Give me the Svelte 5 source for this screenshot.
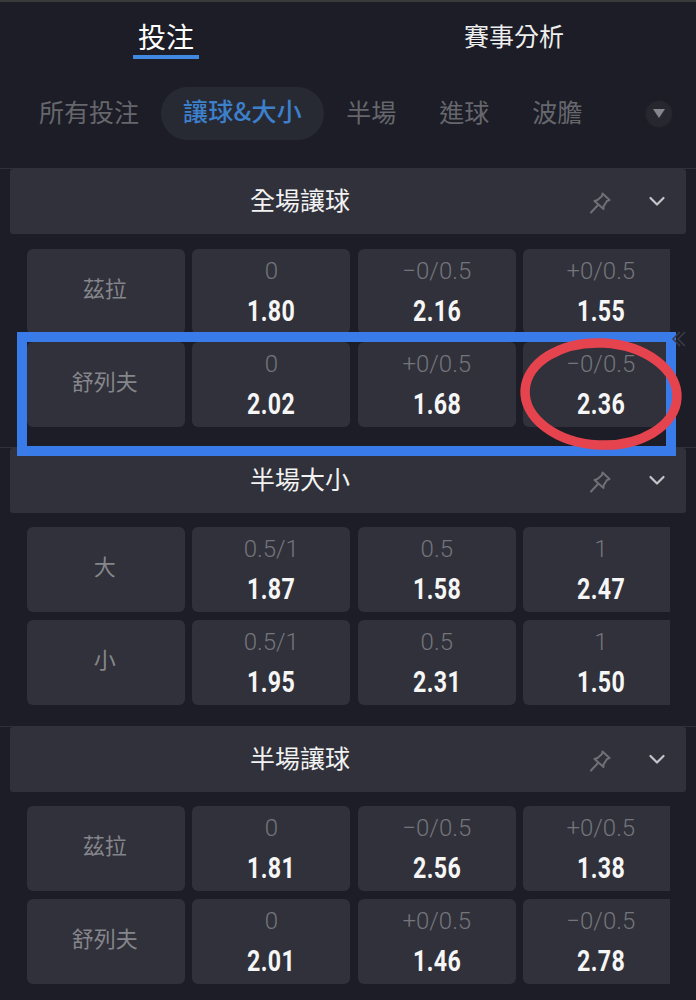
<script lang="ts">
  const filters = ["所有投注", "讓球&大小", "半場", "進球", "波膽"];
  const sections = [
    {
      title: "全場讓球",
      rows: [
        { name: "茲拉", cells: [["0", "1.80"], ["−0/0.5", "2.16"], ["+0/0.5", "1.55"]] },
        { name: "舒列夫", cells: [["0", "2.02"], ["+0/0.5", "1.68"], ["−0/0.5", "2.36"]] },
      ],
    },
    {
      title: "半場大小",
      rows: [
        { name: "大", cells: [["0.5/1", "1.87"], ["0.5", "1.58"], ["1", "2.47"]] },
        { name: "小", cells: [["0.5/1", "1.95"], ["0.5", "2.31"], ["1", "1.50"]] },
      ],
    },
    {
      title: "半場讓球",
      rows: [
        { name: "茲拉", cells: [["0", "1.81"], ["−0/0.5", "2.56"], ["+0/0.5", "1.38"]] },
        { name: "舒列夫", cells: [["0", "2.01"], ["+0/0.5", "1.46"], ["−0/0.5", "2.78"]] },
      ],
    },
  ];
</script>

<div class="page">
  <div class="tabs">
    <div class="tab active">投注</div>
    <div class="tab">賽事分析</div>
  </div>

  <div class="filters">
    {#each filters as f, i}
      <div class="filter" class:on={i === 1}>{f}</div>
    {/each}
    <div class="more"><span class="tri"></span></div>
  </div>

  {#each sections as s}
    <section>
      <header>
        <h3>{s.title}</h3>
        <svg class="pin" width="24" height="24" viewBox="0 0 24 24" fill="none" stroke="#6f7076" stroke-width="2" stroke-linejoin="round" stroke-linecap="round">
          <path d="M14.5 2.5 L21.5 9 L19 10 L15.5 15.5 L15.5 18 L6.5 10 L9.5 9 L14 5 Z" />
          <path d="M10 14 L3 21.5" />
        </svg>
        <svg class="chev" width="18" height="12" viewBox="0 0 18 12" fill="none" stroke="#c4c5c9" stroke-width="2.2" stroke-linecap="round" stroke-linejoin="round">
          <path d="M2.5 3 L9 9.5 L15.5 3" />
        </svg>
      </header>
      <div class="grid">
        {#each s.rows as r}
          <div class="cell name">{r.name}</div>
          {#each r.cells as c}
            <div class="cell">
              <span class="line">{c[0]}</span>
              <span class="odd">{c[1]}</span>
            </div>
          {/each}
        {/each}
      </div>
    </section>
  {/each}

  <div class="blue-box"></div>
  <svg class="side-arrow" width="16" height="20" viewBox="0 0 16 20" fill="none" stroke="#3a3c48" stroke-width="1.5">
    <path d="M9 2 L2 9 L9 16" />
    <path d="M14 2 L7 9 L14 16" />
  </svg>
  <svg class="red-ring" width="170" height="120" viewBox="0 0 170 120" fill="none">
    <ellipse cx="85" cy="60" rx="76" ry="51" stroke="#e5444e" stroke-width="9.5" transform="rotate(3 85 60)" />
  </svg>
</div>

<style>
  :global(body) {
    background: #1c1d26;
  }

  .page {
    position: relative;
    width: 696px;
    height: 1000px;
    overflow: hidden;
    background: #1c1d26;
    border-top: 2px solid #3a3a3c;
    box-sizing: border-box;
    font-family: "Noto Sans CJK TC", "Noto Sans", sans-serif;
  }

  .tabs {
    display: grid;
    grid-template-columns: 332px 1fr;
    height: 58px;
    padding-top: 17px;
    box-sizing: border-box;
    color: #eeeeee;
    line-height: 32px;
  }

  .tab {
    height: 38px;
    font-size: 25px;
  }

  .tab:first-child {
    justify-self: end;
    margin-right: 133px;
    width: 66px;
    text-align: center;
    font-size: 28px;
    color: #ffffff;
    border-bottom: 4px solid #3f8ae0;
    height: 36px;
    line-height: 35px;
  }

  .tab:last-child {
    justify-self: start;
    margin-left: 132px;
  }

  .filters {
    display: flex;
    align-items: center;
    height: 53px;
    margin-top: 27px;
    padding-left: 39px;
    font-size: 25px;
    color: #66676d;
  }

  .filter {
    margin-right: 43px;
    padding-bottom: 5px;
    white-space: nowrap;
  }

  .filter:first-child {
    margin-right: 22px;
  }

  .filter.on {
    margin-right: 22px;
    padding: 0 22px 6px;
    height: 47px;
    line-height: 47px;
    border-radius: 27px;
    background: #282a33;
    color: #3c80cc;
    font-weight: 500;
    letter-spacing: 0.3px;
  }

  .more {
    width: 26px;
    height: 26px;
    margin-left: 21px;
    border-radius: 50%;
    background: #26272f;
    box-shadow: 0 0 3px #26272f;
    display: grid;
    place-items: center;
  }

  .tri {
    width: 0;
    height: 0;
    border-left: 6px solid transparent;
    border-right: 6px solid transparent;
    border-top: 9px solid #85868b;
  }

  section {
    border-top: 1px solid #30313a;
    padding: 0 10px;
    height: 279px;
    box-sizing: border-box;
  }

  .filters + section {
    margin-top: 28px;
  }

  header {
    display: flex;
    align-items: center;
    position: relative;
    height: 65px;
    background: #30313a;
    border-radius: 3px;
    padding-right: 20px;
    justify-content: flex-end;
    gap: 36px;
  }

  h3 {
    position: absolute;
    left: 0;
    right: 0;
    margin: 0;
    top: 12px;
    padding-right: 96px;
    text-align: center;
    font-size: 25px;
    line-height: 36px;
    font-weight: 400;
    color: #f2f2f2;
  }

  .pin {
    margin-top: 2px;
  }

  .chev {
    margin-top: -1px;
  }

  .grid {
    display: grid;
    grid-template-columns: 158px 158px 158px 147px;
    grid-auto-rows: 85px;
    column-gap: 7.5px;
    row-gap: 8px;
    margin: 14px 0 0 16.8px;
  }

  .filters + section .grid {
    margin-top: 15px;
  }

  .cell {
    background: #30313a;
    border-radius: 6px;
    display: flex;
    flex-direction: column;
    align-items: center;
    color: #74757b;
    overflow: hidden;
  }

  .cell:nth-child(4n) {
    border-radius: 6px 0 0 6px;
    padding-left: 8px;
  }

  .name {
    justify-content: center;
    font-size: 22px;
    color: #85868b;
    padding-bottom: 10px;
    padding-right: 2px;
    box-sizing: border-box;
  }

  .line {
    margin-top: 8px;
    font-family: Roboto, "Noto Sans", sans-serif;
    font-size: 24px;
    line-height: 28px;
    font-weight: 300;
  }

  .odd {
    margin-top: 10px;
    font-family: Roboto, sans-serif;
    font-size: 29px;
    line-height: 32px;
    font-weight: 700;
    color: #f6f6f6;
    transform: scaleX(0.8);
    letter-spacing: 0.5px;
  }

  .blue-box {
    position: absolute;
    left: 17px;
    top: 330px;
    width: 659px;
    height: 124px;
    box-sizing: border-box;
    border: 10.5px solid #3a7bea;
  }

  .side-arrow {
    position: absolute;
    left: 671px;
    top: 328px;
  }

  .red-ring {
    position: absolute;
    left: 516px;
    top: 332px;
  }
</style>
